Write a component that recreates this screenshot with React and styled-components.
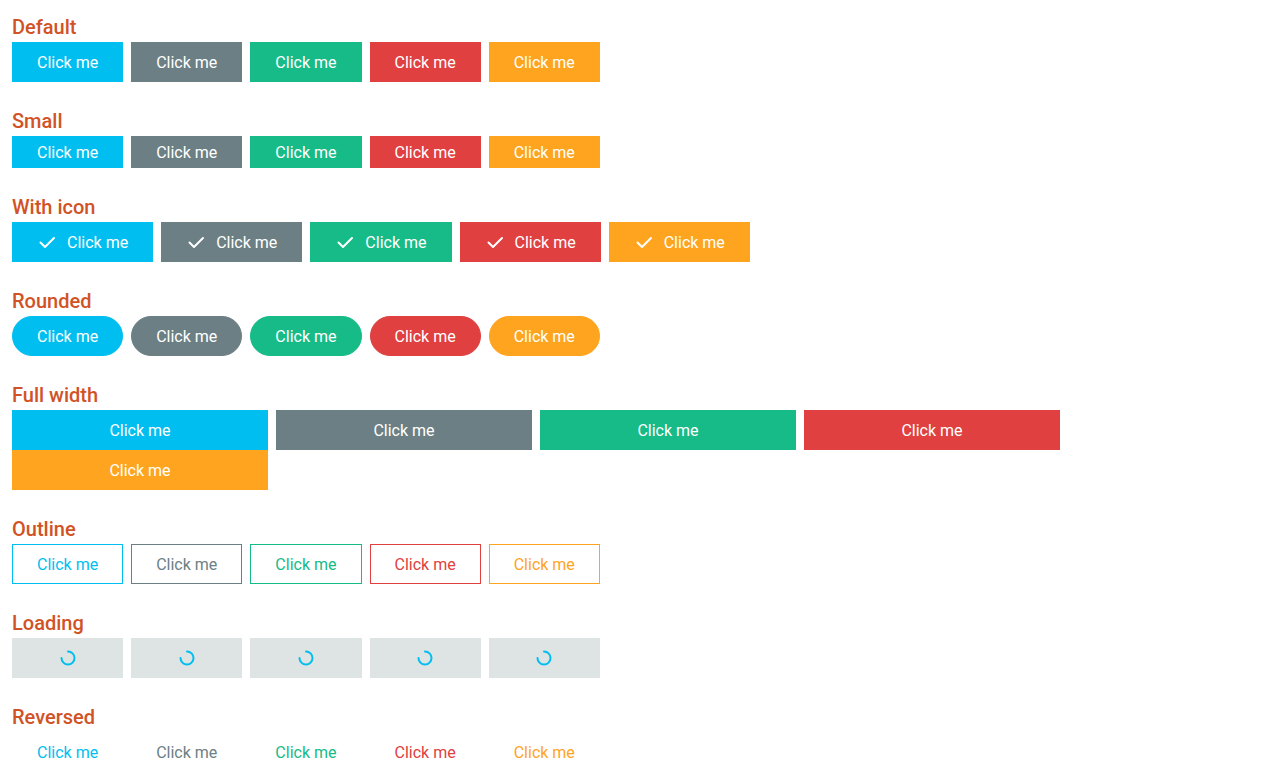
import styled, { createGlobalStyle, css } from "styled-components";

const GlobalStyle = createGlobalStyle`
  body {
    margin: 0;
    background: #fff;
    font-family: Roboto, "Liberation Sans", sans-serif;
  }
`;

const colors = {
  primary: "#00bff0",
  secondary: "#6c7f84",
  success: "#16bb88",
  danger: "#e04040",
  warning: "#ffa41e",
};

const variants = Object.keys(colors);

const Page = styled.div`
  padding: 15px 12px;
`;

const Section = styled.section`
  margin-bottom: 27px;
`;

const Heading = styled.h2`
  margin: 0 0 3px;
  font-size: 20px;
  line-height: 24px;
  font-weight: 500;
  color: #d15325;
`;

const Row = styled.div`
  display: flex;
  flex-wrap: wrap;
  column-gap: 8px;
  row-gap: ${({ $rowGap }) => $rowGap ?? 8}px;
  max-width: ${({ $maxWidth }) => ($maxWidth ? `${$maxWidth}px` : "none")};
`;

const Button = styled.button`
  display: inline-flex;
  align-items: center;
  justify-content: center;
  gap: 10px;
  box-sizing: border-box;
  height: ${({ $small }) => ($small ? 32 : 40)}px;
  padding: 0 24px;
  border: 1px solid ${({ $color }) => $color};
  border-radius: ${({ $rounded }) => ($rounded ? "20px" : "0")};
  background: ${({ $color }) => $color};
  color: #fff;
  font-family: Roboto, "Liberation Sans", sans-serif;
  font-size: 16px;
  cursor: pointer;

  ${({ $full }) =>
    $full &&
    css`
      width: 256px;
    `}

  ${({ $outline, $color }) =>
    $outline &&
    css`
      background: #fff;
      color: ${$color};
    `}

  ${({ $reversed, $color }) =>
    $reversed &&
    css`
      background: transparent;
      border-color: transparent;
      color: ${$color};
    `}

  ${({ $loading }) =>
    $loading &&
    css`
      width: 111.2px;
      background: #dee3e3;
      border-color: #dee3e3;
    `}
`;

const Check = () => (
  <svg width="20" height="20" viewBox="0 0 20 20" fill="none">
    <path
      d="M3.5 10.5 L8 15 L17 6"
      stroke="#fff"
      strokeWidth="2"
      strokeLinecap="round"
      strokeLinejoin="round"
    />
  </svg>
);

const Spinner = () => (
  <svg width="18" height="18" viewBox="0 0 18 18" fill="none">
    <path
      d="M9 2.5 A6.5 6.5 0 1 1 2.5 9"
      stroke="#00bff0"
      strokeWidth="2"
      strokeLinecap="round"
    />
  </svg>
);

const Label = ({ $loading, $icon }) => {
  if ($loading) return <Spinner />;
  if ($icon)
    return (
      <>
        <Check />
        Click me
      </>
    );
  return "Click me";
};

const ButtonRow = ({ rowGap, maxWidth, ...props }) => (
  <Row $rowGap={rowGap} $maxWidth={maxWidth}>
    {variants.map((v) => (
      <Button key={v} $color={colors[v]} {...props}>
        <Label $loading={props.$loading} $icon={props.$icon} />
      </Button>
    ))}
  </Row>
);

export default function App() {
  return (
    <Page>
      <GlobalStyle />
      <Section>
        <Heading>Default</Heading>
        <ButtonRow />
      </Section>
      <Section>
        <Heading>Small</Heading>
        <ButtonRow $small />
      </Section>
      <Section>
        <Heading>With icon</Heading>
        <ButtonRow $icon />
      </Section>
      <Section>
        <Heading>Rounded</Heading>
        <ButtonRow $rounded />
      </Section>
      <Section>
        <Heading>Full width</Heading>
        <ButtonRow $full rowGap={0} maxWidth={1056} />
      </Section>
      <Section>
        <Heading>Outline</Heading>
        <ButtonRow $outline />
      </Section>
      <Section>
        <Heading>Loading</Heading>
        <ButtonRow $loading />
      </Section>
      <Section>
        <Heading>Reversed</Heading>
        <ButtonRow $reversed />
      </Section>
    </Page>
  );
}
